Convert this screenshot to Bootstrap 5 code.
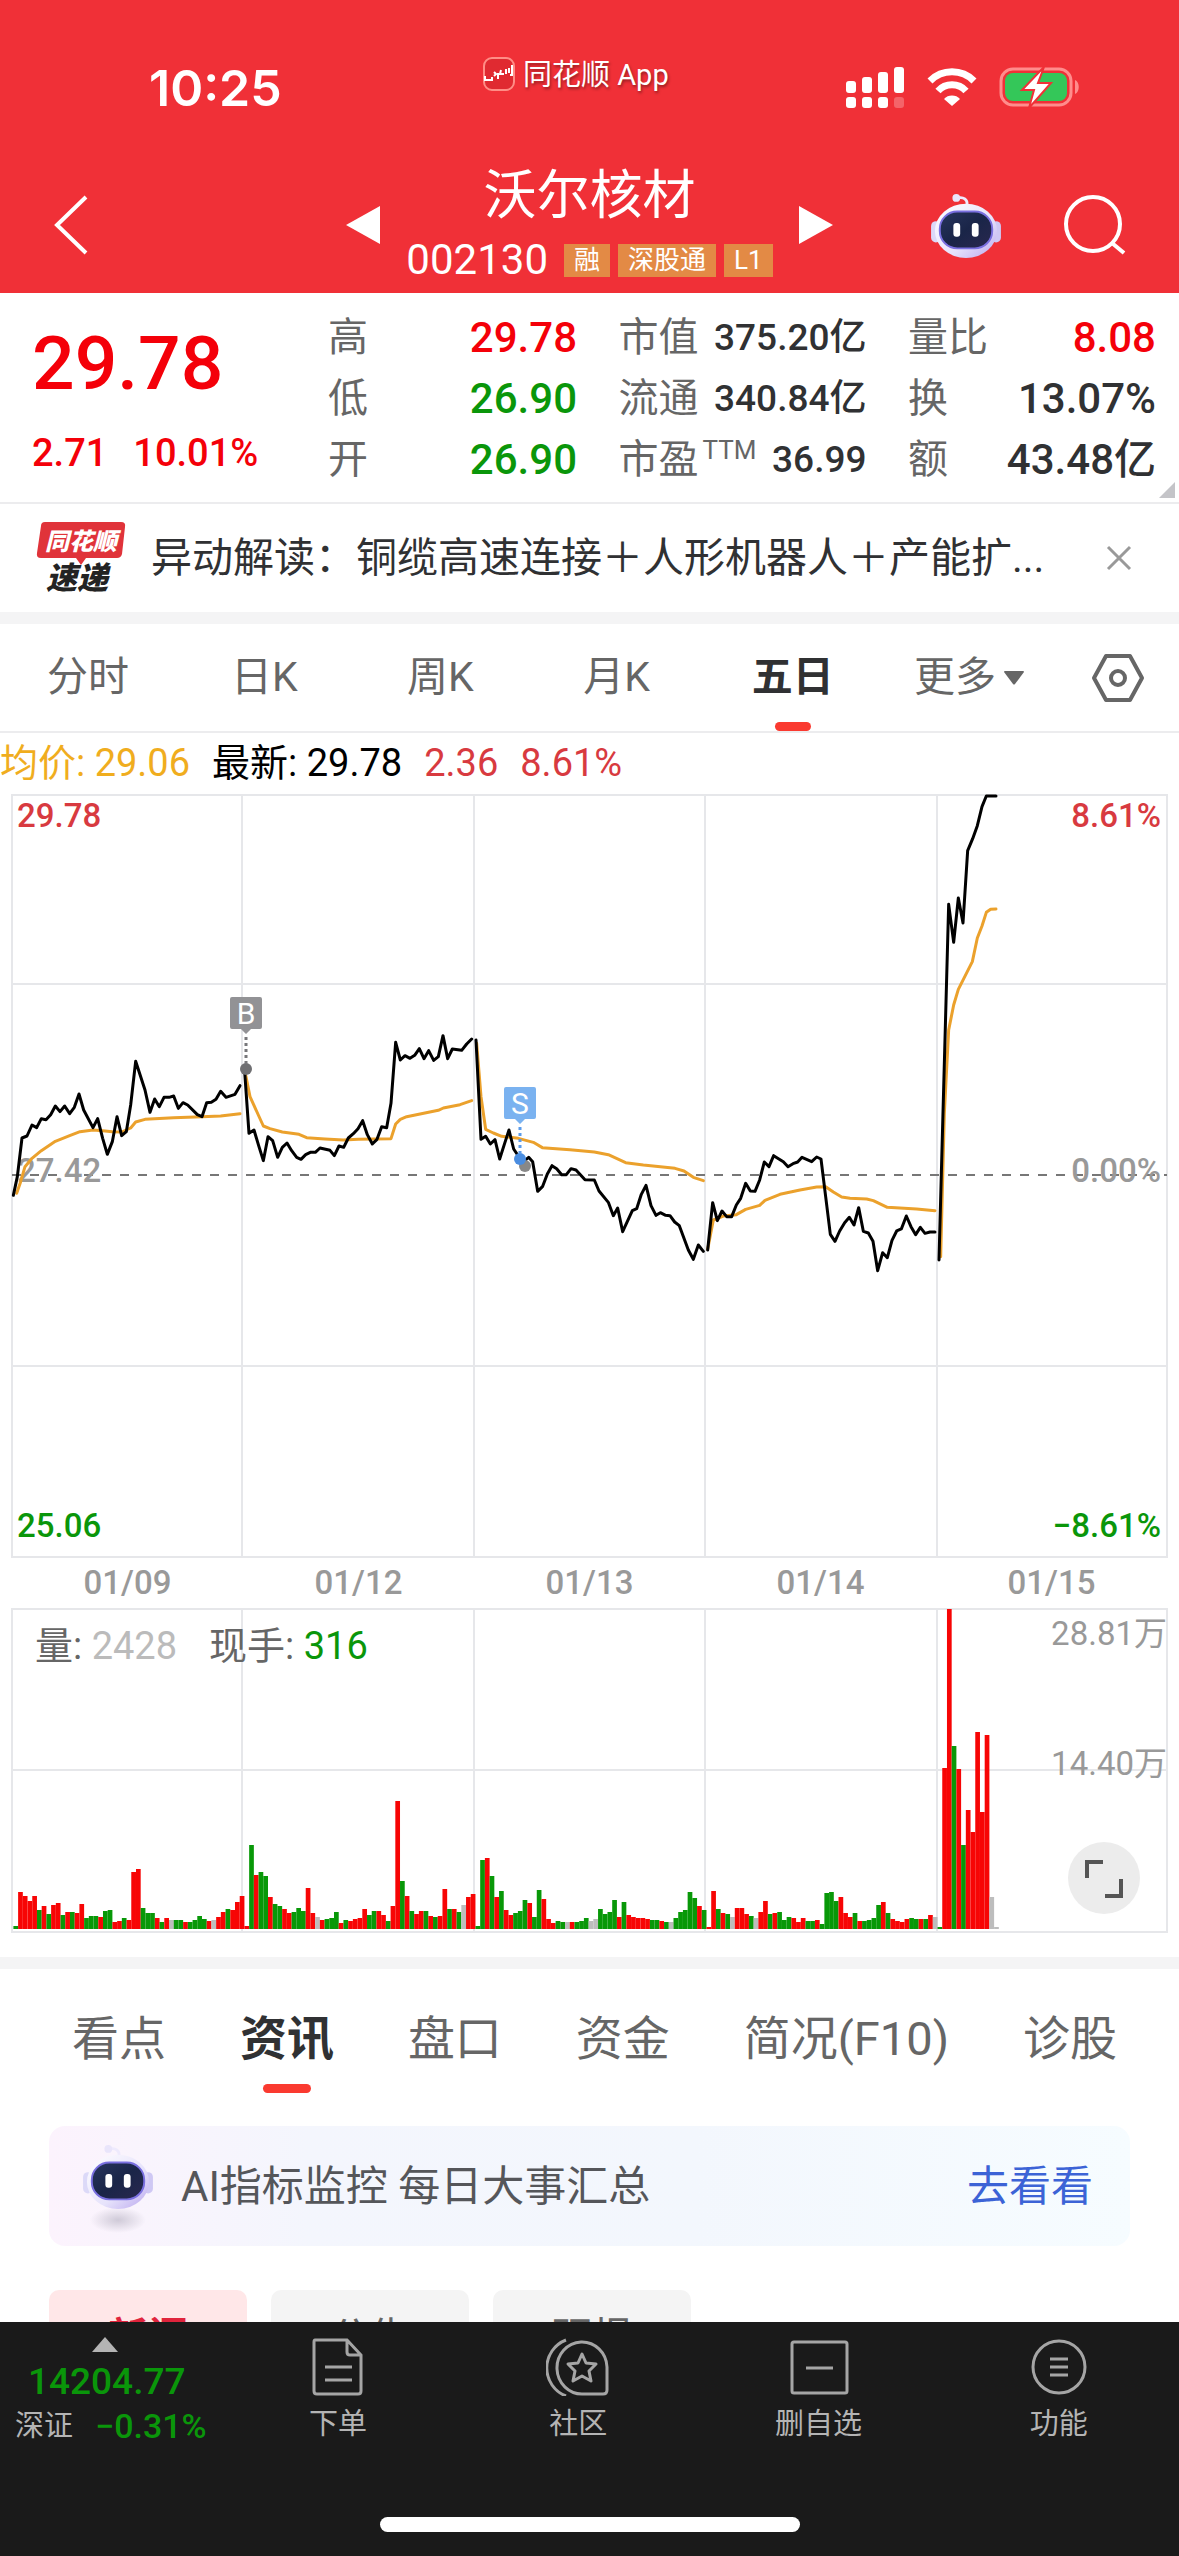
<!DOCTYPE html>
<html lang="zh-CN">
<head>
<meta charset="utf-8">
<meta name="viewport" content="width=device-width, initial-scale=1">
<title>沃尔核材 002130</title>
<link href="https://cdn.jsdelivr.net/npm/bootstrap@5.3.0/dist/css/bootstrap.min.css" rel="stylesheet">
<style>
:root{--up:#f40009;--down:#0a960a;--ink:#303133;--dim:#666;--line:#ececee}
body{font-family:Roboto,"Noto Sans CJK SC",sans-serif;color:var(--ink);background:#fff;line-height:1.2}
svg{display:block;flex:none}
button{background:none;border:0;padding:0;color:inherit;font:inherit}
a{color:inherit;text-decoration:none}
.up{color:var(--up)}.down{color:var(--down)}
.topbar{background:#f03037;color:#fff;height:293px}
.status{height:140px;padding:0 98px 0 149px}
.clock{font:600 50px/60px Inter,sans-serif;margin-top:58px}
.appname{font-size:29px;line-height:36px;margin:57px 0 0 24px;text-shadow:1px 2px 3px #0006;gap:8px}
.signals{margin-top:66px;gap:22px}
.titlebar{height:153px;padding:0 52px}
.side{flex:1 1 0;padding-top:54px}
.side-r{gap:60px}
.step{margin-top:66px}
.stockblock{margin:24px 26px 0}
.stockname{font-size:53px;line-height:64px;font-weight:400;margin:0 0 12px}
.code{font-size:42px;line-height:40px}
.tagbox{background:#e38a45;font-size:26px;line-height:33px;padding:0 10px}
.quote{height:209px;padding:0 23px 0 32px}
.bigprice{font-size:75px;line-height:84px;font-weight:500;margin-top:28px}
.change{font-size:38px;line-height:44px;font-weight:500;margin-top:26px;gap:26px}
.stat{font-size:42px;line-height:61px;font-weight:500;margin-top:14px}
.stat dt{font-size:40px;font-weight:400;color:var(--dim)}
.stat dd{margin:0}
.stat.mid dd{font-size:37px}
.stat sup{font-size:26px;top:-14px;margin-left:4px}
.c1{width:296px}.c2{width:249px}.c3{width:248px}.c4{width:248px}
.newsbar{height:110px;border-top:2px solid var(--line);padding:0 46px 0 36px}
.headline{font-size:41px;line-height:60px;margin-left:25px}
.strip{height:12px;background:#f4f4f5}
.periods{height:109px;border-bottom:2px solid var(--line);font-size:41px;color:var(--dim)}
.periods button{flex:1 1 0;position:relative;height:100%}
.periods button.gear{flex:0 0 122px}
.active-tab{font-weight:700;color:var(--ink)}
.active-tab::after{content:"";position:absolute;bottom:0;left:50%;margin-left:-18px;width:36px;height:9px;border-radius:5px;background:#fa3a30}
.legendline{height:61px;font-size:38px;gap:22px;color:#000}
.avg{color:#f0ad1e}.soft-red{color:#d83a40}
.chartbox{position:relative;font-size:33px;line-height:40px;font-weight:500}
.chartbox svg{width:100%}
.axis{position:absolute}
.axis-l{left:17px}.axis-r{right:18px}.axis-v{right:12px}
.at-top{top:2px}.at-mid{top:357px}.at-low{bottom:12px}
.vol-top{top:6px}.vol-mid{top:136px}
.grey{color:#999}.pale{color:#bbb}
.dates{padding:0 12px;font-size:33px;line-height:50px;font-weight:500;color:#999}
.dates span{flex:1;text-align:center}
.vlegend{position:absolute;left:35px;top:16px;font-size:38px;line-height:44px;font-weight:400;color:var(--dim);gap:32px}
.expand{position:absolute;right:39px;bottom:20px;width:72px;height:72px;border-radius:50%;background:#ececec}
.volbox{margin-bottom:23px}
.sections{height:140px;padding:0 62px 0 72px;font-size:47px;color:var(--dim)}
.sections button{position:relative;height:100%}
.sections .active-tab::after{margin-left:-24px;width:48px;bottom:16px}
.promo{margin:17px 49px 0;height:120px;border-radius:16px;background:linear-gradient(90deg,#fcf3fd 0,#f4f6fd 24%,#f3f7fd 60%,#f6fcff);padding:2px 37px 0 32px;font-size:42px;color:#55565a}
.promo a{color:#3c63d6}
.chips{margin:44px 49px 0;gap:24px}
.chips button{width:198px;height:96px;border-radius:10px;background:#f4f4f4;font-size:40px;color:var(--dim)}
.chips button.on{background:#ffe7e8;color:#e0243c;font-weight:700}
.bottombar{background:#1a1a1a;height:234px;color:#b4b4b4;font-size:29px;line-height:36px}
.idx{width:218px;padding:15px 0 0 15px}
.idx svg{margin-left:77px}
.idxval{font-size:37px;line-height:44px;font-weight:500;padding-left:13px;margin-top:8px}
.idxpct{font-size:34px;line-height:44px;margin-left:22px;font-weight:500}
.bottombar .tool{flex:1 1 0;padding-top:16px}
.tool svg{margin:0 auto 10px}
.homebar{position:absolute;bottom:24px;left:50%;margin-left:-210px;width:420px;height:15px;border-radius:8px;background:#fff}
</style>
</head>
<body>
<svg width="0" height="0" class="position-absolute" aria-hidden="true">
  <defs>
    <linearGradient id="shell" x1="0" y1="0" x2="1" y2="1"><stop offset="0" stop-color="#fff"/><stop offset=".6" stop-color="#e6e2fb"/><stop offset="1" stop-color="#b9a6ee"/></linearGradient>
    <linearGradient id="visor" x1="0" y1="0" x2="1" y2="1"><stop offset="0" stop-color="#27355d"/><stop offset=".5" stop-color="#1a2548"/><stop offset="1" stop-color="#29284f"/></linearGradient>
    <symbol id="robot" viewBox="0 0 72 68">
      <path d="M37 12C38 5 33 3 28 4" fill="none" stroke="#eeeafd" stroke-width="3" stroke-linecap="round"/><circle cx="26" cy="4" r="4" fill="#e9e5fb"/>
      <rect x="0" y="28" width="10" height="22" rx="5" fill="#dcd9f8"/><rect x="62" y="28" width="10" height="22" rx="5" fill="#cfc8f4"/>
      <ellipse cx="36" cy="38" rx="32" ry="28" fill="url(#shell)"/>
      <rect x="9" y="18" width="54" height="38" rx="18" fill="url(#visor)" stroke="#7a70e0" stroke-width="2"/>
      <rect x="23" y="30" width="7" height="14" rx="3" fill="#fff"/><rect x="42" y="30" width="7" height="14" rx="3" fill="#fff"/>
    </symbol>
  </defs>
</svg>

<header class="topbar">
  <div class="status d-flex justify-content-between align-items-start">
    <div class="clock">10:25</div>
    <div class="appname d-flex">
      <svg width="32" height="34" viewBox="0 0 32 34"><rect x="1" y="1" width="30" height="32" rx="8" fill="#e02a31" stroke="#ff8d86" stroke-width="2"/><path d="M2 19v4h7v-3M11 15l2 2-2 2M15 16v6M18 13l-1 4h4M23 12v5M26 11v5M29 8v10h-2" fill="none" stroke="#fff" stroke-width="2"/></svg>
      <span>同花顺 App</span>
    </div>
    <div class="signals d-flex">
      <svg width="59" height="42" viewBox="0 0 59 42" fill="#fff"><rect x="0" y="15" width="10" height="12" rx="3"/><rect x="16" y="11" width="10" height="16" rx="3"/><rect x="32" y="6" width="10" height="21" rx="3"/><rect x="48" y="1" width="10" height="26" rx="3"/><rect x="0" y="31" width="10" height="11" rx="3"/><rect x="16" y="31" width="10" height="11" rx="3"/><rect x="32" y="31" width="10" height="11" rx="3"/><rect x="48" y="31" width="10" height="11" rx="3" opacity=".25"/></svg>
      <svg width="50" height="42" viewBox="0 0 50 42" fill="none" stroke="#fff" stroke-width="7"><path d="M3 15a31 31 0 0 1 44 0"/><path d="M11 25a19 19 0 0 1 28 0"/><path d="M17 33a11 11 0 0 1 16 0L25 40z" fill="#fff" stroke="none"/></svg>
      <svg width="82" height="42" viewBox="0 0 82 42"><rect x="2" y="3" width="70" height="36" rx="12" fill="none" stroke="#ff8c8c" stroke-width="3"/><rect x="6" y="7" width="62" height="28" rx="8" fill="#34c759"/><path d="M76 14c5 2 5 12 0 14z" fill="#ff8c8c"/><path d="M45 1L23 24h12l-5 18 22-25H39z" fill="#fff" stroke="#f03037" stroke-width="2"/></svg>
    </div>
  </div>
  <div class="titlebar d-flex align-items-start">
    <div class="side"><button type="button" aria-label="返回"><svg width="36" height="62" viewBox="0 0 36 62"><path d="M34 3L5 31l29 28" fill="none" stroke="#fff" stroke-width="4"/></svg></button></div>
    <button type="button" aria-label="上一只" class="step"><svg width="34" height="38"><path d="M34 0v38L0 19z" fill="#fff"/></svg></button>
    <div class="stockblock text-center">
      <h1 class="stockname">沃尔核材</h1>
      <div class="d-flex align-items-center"><span class="code me-3">002130</span><div class="d-flex gap-2"><span class="tagbox">融</span><span class="tagbox">深股通</span><span class="tagbox">L1</span></div></div>
    </div>
    <button type="button" aria-label="下一只" class="step"><svg width="34" height="38"><path d="M0 0v38l34-19z" fill="#fff"/></svg></button>
    <div class="side side-r d-flex justify-content-end align-items-start">
      <button type="button" aria-label="智能助手"><svg width="74" height="66"><use href="#robot"/></svg></button>
      <button type="button" aria-label="搜索"><svg width="64" height="64" viewBox="0 0 64 64" fill="none" stroke="#fff" stroke-width="4"><circle cx="30" cy="30" r="27"/><path d="M49 49l12 10"/></svg></button>
    </div>
  </div>
</header>

<main>
<section class="quote d-flex position-relative">
  <div class="c1"><div class="bigprice up">29.78</div><div class="change up d-flex"><span>2.71</span><span>10.01%</span></div></div>
  <dl class="stat c2 mb-0">
    <div class="d-flex justify-content-between"><dt>高</dt><dd class="up">29.78</dd></div>
    <div class="d-flex justify-content-between"><dt>低</dt><dd class="down">26.90</dd></div>
    <div class="d-flex justify-content-between"><dt>开</dt><dd class="down">26.90</dd></div>
  </dl>
  <dl class="stat mid c3 mb-0 ms-auto">
    <div class="d-flex justify-content-between"><dt>市值</dt><dd>375.20亿</dd></div>
    <div class="d-flex justify-content-between"><dt>流通</dt><dd>340.84亿</dd></div>
    <div class="d-flex justify-content-between"><dt>市盈<sup>TTM</sup></dt><dd>36.99</dd></div>
  </dl>
  <dl class="stat c4 mb-0 ms-auto">
    <div class="d-flex justify-content-between"><dt>量比</dt><dd class="up">8.08</dd></div>
    <div class="d-flex justify-content-between"><dt>换</dt><dd>13.07%</dd></div>
    <div class="d-flex justify-content-between"><dt>额</dt><dd>43.48亿</dd></div>
  </dl>
  <svg class="position-absolute bottom-0 end-0 me-1 mb-1" width="16" height="16"><path d="M16 0v16H0z" fill="#c4c4c8"/></svg>
</section>

<section class="newsbar d-flex align-items-center">
  <svg width="90" height="88" viewBox="0 -6 90 88">
    <path d="M9 2h76q5 0 4 5l-3 27q-1 4-5 4H50l-5 7-5-7H5q-5 0-4-5L5 6q0-4 4-4z" fill="#e0333a"/>
    <g font-family="Noto Sans CJK SC" font-weight="900" font-style="italic"><text x="9" y="30" font-size="24" fill="#fff">同花顺</text><text x="10" y="69" font-size="31" fill="#232323">速递</text></g>
  </svg>
  <a href="#" class="headline text-nowrap">异动解读：铜缆高速连接＋人形机器人＋产能扩...</a>
  <button type="button" aria-label="关闭" class="ms-auto"><svg width="28" height="28"><path d="M3 3l22 22M25 3L3 25" stroke="#999" stroke-width="3"/></svg></button>
</section>
<div class="strip"></div>

<nav class="periods d-flex align-items-center">
  <button type="button">分时</button><button type="button">日K</button><button type="button">周K</button><button type="button">月K</button><button type="button" class="active-tab">五日</button>
  <button type="button" class="d-flex align-items-center justify-content-center gap-2">更多<svg width="20" height="14"><path d="M0 1q0-1 1-1h18q1 0 1 1l-9 12q-1 1-2 0z" fill="#666"/></svg></button>
  <button type="button" class="gear d-flex align-items-center justify-content-center" aria-label="设置"><svg width="54" height="50" viewBox="0 0 54 50" fill="none" stroke="#666" stroke-width="4"><path d="M15 3h24l12 22-12 22H15L3 25z" stroke-linejoin="round"/><circle cx="27" cy="25" r="7"/></svg></button>
</nav>

<div class="legendline d-flex align-items-center"><span class="avg">均价: 29.06</span><span>最新: 29.78</span><span class="soft-red">2.36</span><span class="soft-red">8.61%</span></div>

<section class="chartbox">
  <svg height="764" viewBox="0 0 1179 764" preserveAspectRatio="none">
    <g fill="none" stroke="#e6e7ea" stroke-width="2"><rect x="12" y="1" width="1155" height="762"/><path d="M242 0v764M474 0v764M705 0v764M937 0v764M12 190h1155M12 572h1155"/></g>
    <path d="M12 381h1155" stroke="#777" stroke-width="2" stroke-dasharray="9 9"/>
  </svg>
  <span class="axis axis-l at-top soft-red">29.78</span><span class="axis axis-r at-top soft-red">8.61%</span>
  <span class="axis axis-l at-mid grey">27.42</span><span class="axis axis-r at-mid grey">0.00%</span>
  <span class="axis axis-l at-low down">25.06</span><span class="axis axis-r at-low down">−8.61%</span>
  <svg class="position-absolute top-0 start-0" height="764" viewBox="0 0 1179 764" preserveAspectRatio="none" fill="none" stroke-linejoin="round" stroke-linecap="round">
    <g stroke="#eba12c" stroke-width="9">
      <g transform="translate(0 186) scale(.33333)"><polyline points="50,640 62,605 75,560 96,535 124,512 166,484 209,467 240,455 279,450 308,452 337,455 365,456 392,444 407,426 435,418 521,413 606,410 662,408 720,401"/><polyline points="737,285 750,350 775,405 790,438 810,446 847,456 897,463 920,473 975,477 1030,480 1075,478 1173,476 1187,432 1201,418 1220,410 1315,391 1330,384 1380,374 1415,362"/></g>
      <g transform="translate(470 186) scale(.33333)"><polyline points="20,190 33,350 47,448 70,459 95,469 145,475 190,487 217,503 300,509 373,516 415,524 467,548 520,555 615,565 642,573 670,592 700,602"/></g>
      <g transform="translate(700 -14) scale(.33333)"><polyline points="23,1408 40,1320 70,1308 109,1304 137,1288 179,1276 195,1261 240,1243 300,1230 350,1221 377,1220 400,1236 425,1251 450,1255 500,1257 520,1262 562,1282 650,1287 705,1292"/><polyline points="722,1430 733,1000 746,750 761,675 775,628 817,545 832,474 846,438 859,397 872,388 888,387"/></g>
    </g>
    <g stroke="#000" stroke-width="9">
      <g transform="translate(0 186) scale(.33333)"><polyline points="40,646 52,590 66,474 81,468 96,435 110,443 124,416 138,419 152,404 166,378 180,395 194,378 209,401 223,382 237,342 251,390 279,443 293,416 308,475 322,523 337,485 351,410 365,467 379,455 392,375 407,244 435,330 450,397 464,357 478,380 492,352 507,352 521,348 535,385 549,368 563,375 592,404 606,410 620,368 634,367 648,358 662,334 678,352 705,343 720,317"/><polyline points="734,275 747,460 762,450 776,497 790,542 804,470 818,482 833,532 847,502 861,489 875,512 890,532 903,538 917,524 931,517 946,517 960,504 990,511 1003,527 1017,498 1031,502 1045,474 1060,461 1074,446 1088,422 1102,464 1117,492 1131,478 1145,440 1160,443 1173,370 1187,187 1201,240 1215,227 1230,235 1244,226 1258,206 1272,236 1286,212 1301,241 1315,230 1329,167 1343,236 1357,207 1385,211 1400,192 1415,177"/></g>
      <g transform="translate(470 186) scale(.33333)"><polyline points="18,180 33,478 47,469 61,492 75,479 89,537 103,493 117,450 131,507 145,528 160,545 176,532 188,545 203,634 218,619 232,582 246,557 260,566 275,584 289,584 303,566 318,570 345,599 373,600 387,633 415,667 430,707 443,684 458,755 487,692 500,686 514,643 528,616 543,677 558,706 571,698 587,706 600,707 614,726 628,737 655,810 670,838 685,795 700,814"/></g>
      <g transform="translate(700 -14) scale(.33333)"><polyline points="23,1410 38,1268 52,1322 66,1293 80,1310 95,1310 109,1275 122,1255 137,1210 151,1233 165,1234 179,1200 193,1146 207,1160 221,1127 250,1145 264,1160 279,1151 293,1146 306,1132 335,1145 350,1131 363,1137 377,1250 391,1363 405,1384 419,1353 434,1328 448,1312 462,1335 476,1283 490,1354 505,1359 519,1384 533,1472 548,1418 562,1433 576,1381 590,1353 604,1347 619,1308 633,1340 647,1364 661,1342 675,1360 690,1356 705,1356"/><polyline points="717,1440 746,373 761,487 775,354 789,429 803,212 818,176 832,137 846,80 859,48 888,48"/></g>
    </g>
    <g stroke="none">
      <path d="M232 203h28q2 0 2 2v28q0 2-2 2h-9l-5 5-5-5h-9q-2 0-2-2v-28q0-2 2-2z" fill="#929295"/><circle cx="246" cy="275" r="6" fill="#6f6f72"/>
      <path d="M506 293h28q2 0 2 2v28q0 2-2 2h-9l-5 5-5-5h-9q-2 0-2-2v-28q0-2 2-2z" fill="#7ab2f0"/><circle cx="525" cy="372" r="6" fill="#888"/><circle cx="520" cy="365" r="6" fill="#4a8de0"/>
      <g font-family="Roboto" font-size="30" fill="#fff" text-anchor="middle" font-weight="400"><text x="246" y="230">B</text><text x="520" y="320">S</text></g>
    </g>
    <path d="M246 243v28" stroke="#77777a" stroke-width="3" stroke-dasharray="3 3" stroke-linecap="butt"/><path d="M520 333v28" stroke="#5b9bea" stroke-width="3" stroke-dasharray="3 3" stroke-linecap="butt"/>
  </svg>
</section>

<div class="dates d-flex"><span>01/09</span><span>01/12</span><span>01/13</span><span>01/14</span><span>01/15</span></div>

<section class="chartbox volbox">
  <svg id="volume" height="326" viewBox="0 0 1179 326" preserveAspectRatio="none"><g fill="none" stroke="#e6e7ea" stroke-width="2"><rect x="12" y="1" width="1155" height="323"/><path d="M242 0v324M474 0v324M705 0v324M937 0v324M12 162h1155"/></g></svg>
  <div class="vlegend d-flex"><span>量: <span class="pale">2428</span></span><span>现手: <span class="down">316</span></span></div>
  <span class="axis axis-v vol-top grey fw-normal">28.81万</span><span class="axis axis-v vol-mid grey fw-normal">14.40万</span>
  <button type="button" class="expand" aria-label="全屏"><svg viewBox="0 0 72 72" fill="none" stroke="#555" stroke-width="4"><path d="M19 36V20h16M53 37v17H37"/></svg></button>
</section>

<div class="strip"></div>
<nav class="sections d-flex justify-content-between">
  <button type="button">看点</button><button type="button" class="active-tab">资讯</button><button type="button">盘口</button><button type="button">资金</button><button type="button">简况(F10)</button><button type="button">诊股</button>
</nav>
<div class="promo d-flex align-items-center">
  <svg width="80" height="92" viewBox="0 0 80 92"><defs><radialGradient id="shade"><stop offset="0" stop-color="#bdb8c8" stop-opacity=".7"/><stop offset="1" stop-color="#bdb8c8" stop-opacity="0"/></radialGradient></defs><ellipse cx="37" cy="79" rx="28" ry="13" fill="url(#shade)"/><use href="#robot" x="2" y="4" width="70" height="66"/></svg>
  <span class="ms-3 ps-1">AI指标监控 每日大事汇总</span><a href="#" class="ms-auto">去看看</a>
</div>
<div class="chips d-flex"><button type="button" class="on">新闻</button><button type="button">公告</button><button type="button">研报</button></div>
</main>

<footer class="bottombar fixed-bottom">
  <div class="d-flex">
    <a href="#" class="idx"><svg width="26" height="15"><path d="M13 0l13 15H0z" fill="#b4b4b4"/></svg><div class="idxval down">14204.77</div><div class="d-flex align-items-center text-nowrap">深证<span class="idxpct down">−0.31%</span></div></a>
    <a href="#" class="tool text-center"><svg width="56" height="58" viewBox="0 0 56 58" fill="none" stroke="#a5a5a5" stroke-width="3"><path d="M5 2h32l14 15v36q0 3-3 3H7q-3 0-3-3V4q0-2 1-2zM37 2v12q0 3 3 3h11M15 29h27M15 42h27"/></svg>下单</a>
    <a href="#" class="tool text-center"><svg width="64" height="58" viewBox="0 0 64 58" fill="none" stroke="#a5a5a5" stroke-width="3"><path d="M61 29v23q0 4-4 4H37a25 26 0 1 1 24-27zM20 2a30 30 0 0 0 0 56"/><path d="M36 16l4 9 10 1-7 7 2 10-9-5-9 5 2-10-7-7 10-1z" stroke-linejoin="round"/></svg>社区</a>
    <a href="#" class="tool text-center"><svg width="60" height="58" viewBox="0 0 60 58" fill="none" stroke="#a5a5a5" stroke-width="3"><rect x="3" y="4" width="55" height="51" rx="2"/><path d="M17 30h27"/></svg>删自选</a>
    <a href="#" class="tool text-center"><svg width="56" height="58" viewBox="0 0 56 58" fill="none" stroke="#a5a5a5" stroke-width="3"><circle cx="28" cy="29" r="26"/><path d="M19 21h18M19 29h18M19 37h18"/></svg>功能</a>
  </div>
  <div class="homebar"></div>
</footer>

<script>
// Five-minute volume bars, 49 per trading day: r = up, g = down, x = unchanged
const days = [
 "g3 r37 r33 r28 r33 g19 r23 g15 r24 r26 g14 r17 g17 r16 r25 g11 g13 g13 r12 g18 g19 r7 r8 g11 r9 r57 r60 g21 g16 g16 r11 g7 r11 x9 g9 g9 r7 g7 g9 g13 g10 r8 x9 r12 r17 g20 r19 r27 r33",
 "r3 g84 r54 g57 g53 r32 g25 g23 r20 r16 g17 g21 g18 r41 r16 x12 r9 g10 g11 g17 r6 g9 r8 r10 r11 r20 g14 g18 r18 r14 g8 r23 r128 g48 r33 g18 r15 r18 g18 r13 g12 r13 r40 g20 r20 g17 x24 r32 r35",
 "g3 g69 r71 g53 r32 g38 r19 r14 g16 g18 g29 r26 g12 g39 r30 r10 r6 g8 g7 x7 r7 g7 g8 g11 x8 x10 g20 g15 g17 g29 r12 g27 r14 r12 r11 r11 r10 g9 g9 r8 g7 x7 g11 g17 g19 g37 g31 r23 g19",
 "r2 r38 g20 r16 g15 x12 r21 r21 r15 g13 x11 r17 r28 g15 r16 g17 g9 g12 r11 r7 r11 g8 g8 r9 g5 g36 g37 g28 r32 r16 r12 g16 r8 g8 g9 g11 g24 r27 g16 r10 r8 r7 r10 g11 g10 r10 g10 r14 x12",
 "g2 r161 r320 g183 r160 g84 r119 r97 r197 r117 r194 x32 x2"
];
const tone = {r:"#f70505", g:"#089808", x:"#bdbdbd"};
const svg = document.getElementById("volume");
days.join(" ").split(" ").forEach((b, i) => {
  const r = document.createElementNS("http://www.w3.org/2000/svg", "rect"), h = +b.slice(1);
  r.setAttribute("x", 13.4 + i * 4.715); r.setAttribute("y", 321 - h);
  r.setAttribute("width", 4.7); r.setAttribute("height", h); r.setAttribute("fill", tone[b[0]]);
  svg.appendChild(r);
});
</script>
<script src="https://cdn.jsdelivr.net/npm/bootstrap@5.3.0/dist/js/bootstrap.bundle.min.js"></script>
</body>
</html>
